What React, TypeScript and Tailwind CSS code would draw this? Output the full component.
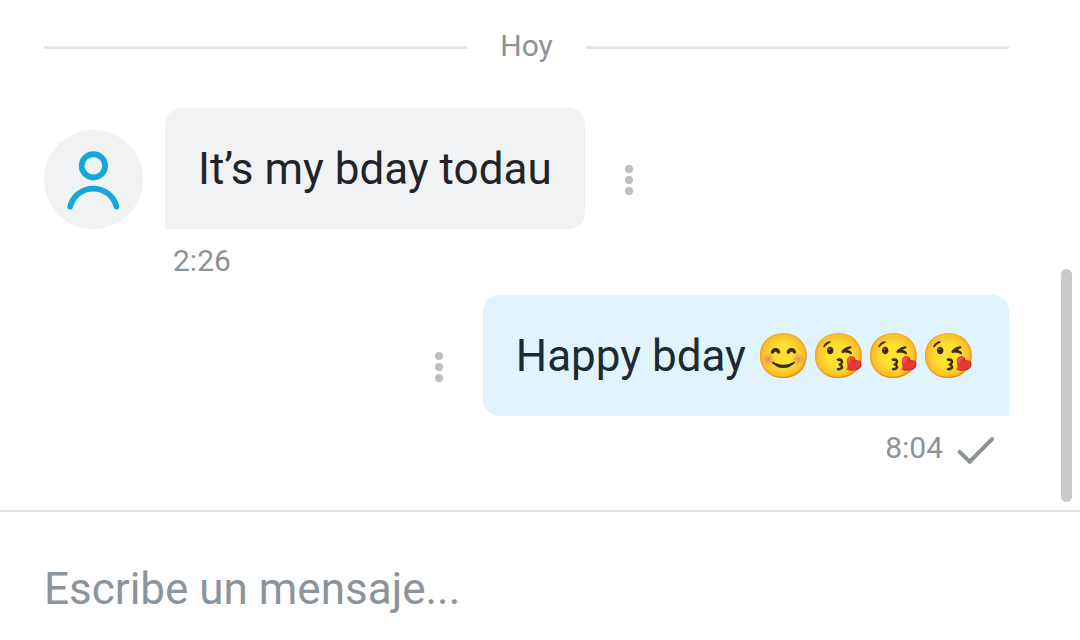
import { useState } from 'react'
import type { ReactNode } from 'react'

interface Message {
  id:   number
  mine: boolean
  text: string
  time: string
}

const MESSAGES: Message[] = [
  { id: 1, mine: false, text: 'It’s my bday todau',  time: '2:26' },
  { id: 2, mine: true,  text: 'Happy bday 😊😘😘😘', time: '8:04' },
]

// Person outline in a grey disc
function Avatar() {
  return (
    <div className="mr-[22px] size-[99px] flex-none rounded-full bg-[#f1f2f4] text-[#14a7dc]">
      <svg viewBox="0 0 99 99" fill="none" stroke="currentColor" strokeWidth={5.8}
        strokeLinecap="round" className="size-full" aria-hidden="true">
        <circle cx="49.4" cy="35.8" r="11.7" />
        <path d="M26.2 76.6a23.8 23.8 0 0 1 46.2 0" />
      </svg>
    </div>
  )
}

function MenuButton() {
  return (
    <button type="button" aria-label="Opciones del mensaje"
      className="flex h-[99px] w-[88px] flex-none flex-col items-center justify-center gap-[3px] cursor-pointer">
      <span className="size-2 rounded-full bg-[#bcbfc0]" />
      <span className="size-2 rounded-full bg-[#bcbfc0]" />
      <span className="size-2 rounded-full bg-[#bcbfc0]" />
    </button>
  )
}

function CheckIcon() {
  return (
    <svg viewBox="0 0 38 34" fill="none" stroke="currentColor" strokeWidth={4}
      strokeLinecap="round" className="h-[34px] w-[38px]" aria-hidden="true">
      <path d="M2.5 20.8l10.2 9.8L35 8.2" />
    </svg>
  )
}

function DateDivider({ children }: { children: ReactNode }) {
  return (
    <div className="flex items-center gap-[33px] pb-[41px]">
      <span className="h-[3px] flex-1 bg-[#e4e5e6]" />
      <span className="pb-[3px] text-[30px] leading-9 text-[#8c9296]">{children}</span>
      <span className="h-[3px] flex-1 bg-[#e4e5e6]" />
    </div>
  )
}

function MessageRow({ mine, text, time }: Message) {
  return (
    <li>
      <div className={`flex items-end ${mine ? 'justify-end' : ''}`}>
        {mine ? <MenuButton /> : <Avatar />}
        <p
          className={`
            rounded-2xl px-[33px] pt-[35px] pb-[34px] text-[44px] leading-[52px]
            ${mine ? 'rounded-br-none bg-[#e1f4fd] text-[#1b2a33]' : 'rounded-bl-none bg-[#f1f2f4] text-[#212327]'}
          `}
        >
          {text}
        </p>
        {!mine && <MenuButton />}
      </div>
      <div
        className={`
          flex items-center gap-[14px] pt-[14px] text-[30px] leading-9 text-[#8c9296]
          ${mine ? 'justify-end pr-[14px]' : 'pl-[129px]'}
        `}
      >
        <time>{time}</time>
        {mine && <CheckIcon />}
      </div>
    </li>
  )
}

export default function App() {
  const [draft, setDraft] = useState('')

  return (
    <div className="flex min-h-screen flex-col bg-white font-[Roboto,'Noto_Color_Emoji',sans-serif]">
      <main className="relative flex-1 pt-7 pr-[71px] pl-11">
        <DateDivider>Hoy</DateDivider>
        <ul className="flex flex-col gap-4">
          {MESSAGES.map(m => <MessageRow key={m.id} {...m} />)}
        </ul>

        {/* Scroll thumb over the conversation */}
        <div className="absolute right-2 bottom-2 h-[233px] w-[11px] rounded-full bg-[#cacaca]" />
      </main>

      <form onSubmit={e => e.preventDefault()} className="border-t-2 border-[#e1e3e5] px-11 pt-[51px] pb-[25px]">
        <input
          type="text"
          value={draft}
          onChange={e => setDraft(e.target.value)}
          aria-label="Mensaje"
          placeholder="Escribe un mensaje..."
          className="block w-full text-[44px] leading-[52px] text-[#212327] outline-none placeholder:text-[#8c949b]"
        />
      </form>
    </div>
  )
}
